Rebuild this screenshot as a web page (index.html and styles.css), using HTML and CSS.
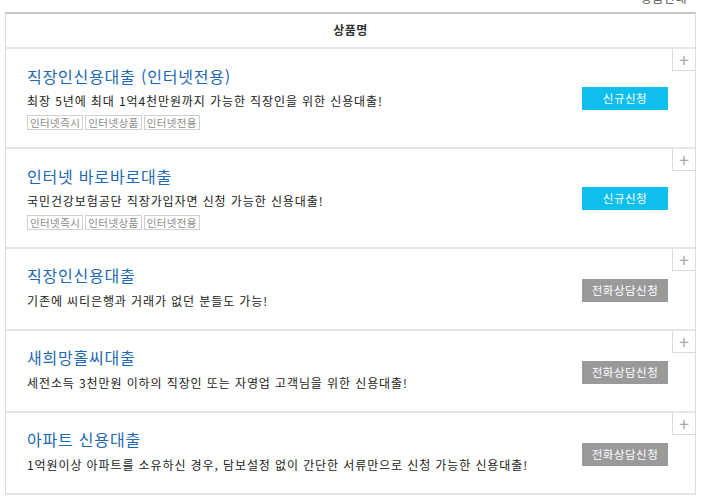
FILE: index.html
```html
<!DOCTYPE html>
<html lang="ko">
<head>
<meta charset="utf-8">
<link rel="stylesheet" href="styles.css">
</head>
<body>
<div class="top-note">· 상품안내</div>
<div class="table">
  <div class="thead">상품명</div>
  <div class="row tall">
    <div class="info">
      <div class="title">직장인신용대출 (인터넷전용)</div>
      <div class="desc">최장 5년에 최대 1억4천만원까지 가능한 직장인을 위한 신용대출!</div>
      <div class="tags"><span class="tag">인터넷즉시</span><span class="tag">인터넷상품</span><span class="tag">인터넷전용</span></div>
    </div>
    <div class="act"><span class="btn blue">신규신청</span></div>
    <span class="plus">+</span>
  </div>
  <div class="row tall">
    <div class="info">
      <div class="title">인터넷 바로바로대출</div>
      <div class="desc">국민건강보험공단 직장가입자면 신청 가능한 신용대출!</div>
      <div class="tags"><span class="tag">인터넷즉시</span><span class="tag">인터넷상품</span><span class="tag">인터넷전용</span></div>
    </div>
    <div class="act"><span class="btn blue">신규신청</span></div>
    <span class="plus">+</span>
  </div>
  <div class="row">
    <div class="info">
      <div class="title">직장인신용대출</div>
      <div class="desc">기존에 씨티은행과 거래가 없던 분들도 가능!</div>
    </div>
    <div class="act"><span class="btn gray">전화상담신청</span></div>
    <span class="plus">+</span>
  </div>
  <div class="row">
    <div class="info">
      <div class="title">새희망홀씨대출</div>
      <div class="desc">세전소득 3천만원 이하의 직장인 또는 자영업 고객님을 위한 신용대출!</div>
    </div>
    <div class="act"><span class="btn gray">전화상담신청</span></div>
    <span class="plus">+</span>
  </div>
  <div class="row">
    <div class="info">
      <div class="title">아파트 신용대출</div>
      <div class="desc">1억원이상 아파트를 소유하신 경우, 담보설정 없이 간단한 서류만으로 신청 가능한 신용대출!</div>
    </div>
    <div class="act"><span class="btn gray">전화상담신청</span></div>
    <span class="plus">+</span>
  </div>
</div>
</body>
</html>
```
FILE: styles.css
```css
* { box-sizing: border-box; }
html, body { margin: 0; padding: 0; background: #fff; }
body {
  font-family: "Noto Sans CJK KR", "Noto Sans", sans-serif;
  color: #333;
  width: 705px;
  overflow: hidden;
}
.top-note {
  line-height: 12px;
  text-align: right;
  padding-right: 18px;
  font-size: 12px;
  color: #555;
  margin-top: -8px;
  height: 20px;
  overflow: hidden;
  letter-spacing: 0.5px;
}
.table {
  margin-left: 5px;
  width: 691px;
  border-top: 2px solid #c8c8c8;
  border-left: 1px solid #dcdcdc;
  border-right: 1px solid #dcdcdc;
}
.thead {
  height: 35px;
  line-height: 32px;
  text-align: center;
  font-size: 12px;
  font-weight: bold;
  color: #333;
  border-bottom: 2px solid #e8e8e8;
  letter-spacing: 0.5px;
}
.row {
  position: relative;
  display: flex;
  align-items: center;
  height: 82px;
  border-bottom: 2px solid #e6e6e6;
  padding-left: 21px;
}
.row.tall { height: 100px; }
.info { flex: 1; padding-bottom: 4px; }
.row.tall .info { padding-bottom: 0; }
.title {
  font-size: 16px;
  line-height: 20px;
  color: #2168b3;
  margin-bottom: 8px;
  letter-spacing: 0.8px;
}
.row.tall .title { margin-bottom: 7px; }
.desc {
  font-size: 12px;
  line-height: 16px;
  color: #222;
  letter-spacing: 0.9px;
}
.tags { display: flex; gap: 2px; margin-top: 6px; }
.tag {
  font-size: 10.5px;
  line-height: 13px;
  color: #8a8a8a;
  border: 1px solid #cfcfcf;
  padding: 0 2px;
  letter-spacing: 0.4px;
}
.act { width: 113px; padding-top: 2px; }
.row.tall .act { padding-top: 0; }
.btn {
  display: block;
  width: 86px;
  height: 23px;
  line-height: 23px;
  text-align: center;
  font-size: 11.5px;
  color: #fff;
  letter-spacing: 0.5px;
}
.btn.blue { background: #0ebfee; }
.btn.gray { background: #9a9a9a; }
.plus {
  position: absolute;
  top: 0;
  right: 0;
  width: 23px;
  height: 22px;
  border-left: 1px solid #dadada;
  border-bottom: 1px solid #dadada;
  text-align: center;
  line-height: 20px;
  font-size: 18px;
  color: #aaa;
}
```
